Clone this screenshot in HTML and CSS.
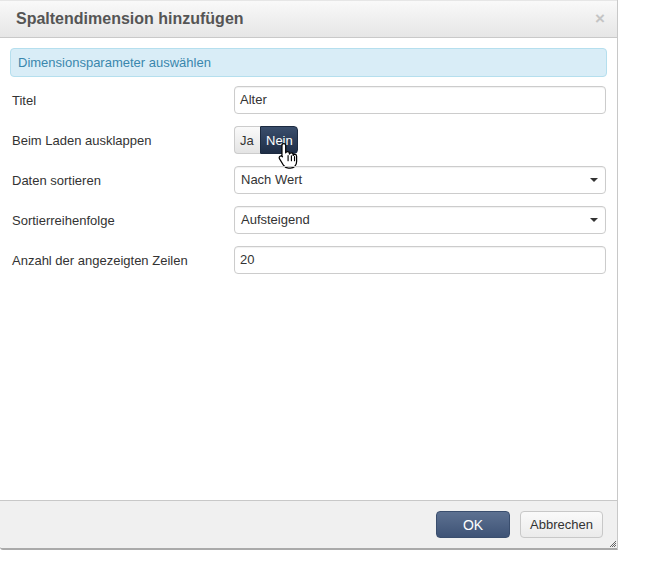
FILE: index.html
```html
<!DOCTYPE html>
<html>
<head>
<meta charset="utf-8">
<link rel="stylesheet" href="styles.css">
</head>
<body>
<div class="dialog">
  <div class="header">
    <h1 class="title">Spaltendimension hinzufügen</h1>
    <span class="close">×</span>
  </div>
  <div class="body">
    <div class="info">Dimensionsparameter auswählen</div>
    <div class="form">
      <div class="row">
        <label class="label">Titel</label>
        <div class="field"><div class="input">Alter</div></div>
      </div>
      <div class="row">
        <label class="label">Beim Laden ausklappen</label>
        <div class="field">
          <div class="toggle">
            <span class="opt opt-ja">Ja</span>
            <span class="opt opt-nein">Nein</span>
            <svg class="cursor" width="20" height="26" viewBox="0 0 20 26">
              <path d="M5.5 1.5c1 0 1.8.8 1.8 1.8v7.2c.3-.8 1-1.3 1.8-1.3 1 0 1.8.8 1.8 1.8v.6c.3-.7 1-1.2 1.8-1.2 1 0 1.8.8 1.8 1.8v.7c.3-.6.9-1 1.6-1 1 0 1.7.8 1.7 1.8v5.3c0 3.4-2.4 6.2-6 6.2H9.9c-2 0-3.5-1-4.6-2.6L1.4 16.3c-.6-.9-.4-2 .4-2.5.8-.5 1.8-.3 2.4.4l-.5-.4V3.3c0-1 .8-1.8 1.8-1.8z" fill="#fff" stroke="#000" stroke-width="1.2" stroke-linejoin="round"/>
              <path d="M9.6 13v5M12.8 13.3v4.7M15.8 14v4" stroke="#000" stroke-width="1.1" stroke-linecap="round"/>
            </svg>
          </div>
        </div>
      </div>
      <div class="row">
        <label class="label">Daten sortieren</label>
        <div class="field"><div class="input select">Nach Wert<span class="caret"></span></div></div>
      </div>
      <div class="row">
        <label class="label">Sortierreihenfolge</label>
        <div class="field"><div class="input select">Aufsteigend<span class="caret"></span></div></div>
      </div>
      <div class="row">
        <label class="label">Anzahl der angezeigten Zeilen</label>
        <div class="field"><div class="input">20</div></div>
      </div>
    </div>
  </div>
  <div class="footer">
    <button class="btn btn-primary">OK</button>
    <button class="btn btn-default">Abbrechen</button>
    <svg class="grip" width="8" height="8" viewBox="0 0 8 8">
      <path d="M7 1L1 7M7 3L3 7M7 5L5 7" stroke="#666" stroke-width="1"/>
    </svg>
  </div>
</div>
</body>
</html>
```

FILE: styles.css
```css
* { box-sizing: border-box; }
html, body { margin: 0; padding: 0; background: #fff; }
body {
  font-family: "Liberation Sans", Arial, sans-serif;
  font-size: 13px;
  color: #333;
  width: 646px;
  height: 567px;
}
.dialog {
  width: 618px;
  height: 550px;
  border-right: 1px solid #c8c8c8;
  border-bottom: 2px solid #aaa;
  border-bottom-left-radius: 3px;
  background: #fff;
  display: flex;
  flex-direction: column;
  position: relative;
}
.header {
  height: 38px;
  flex: none;
  display: flex;
  align-items: center;
  justify-content: space-between;
  padding: 0 12px 0 16px;
  background: linear-gradient(#f9f9f9, #e6e6e6);
  border-bottom: 1px solid #c9c9c9;
  border-top: 1px solid #e6e6e6;
}
.title {
  margin: 0;
  font-size: 16px;
  font-weight: bold;
  color: #555;
  line-height: 20px;
  margin-top: -1px;
}
.close {
  font-size: 17px;
  font-weight: bold;
  color: #c4c4c4;
  line-height: 1;
  margin-top: -2px;
}
.body {
  flex: 1;
  padding: 10px 10px 0 10px;
}
.info {
  height: 29px;
  background: #d9edf7;
  border: 1px solid #b5dfee;
  border-radius: 4px;
  color: #3a87ad;
  padding: 0 7px;
  line-height: 27px;
  font-size: 13px;
}
.form {
  display: flex;
  flex-direction: column;
  gap: 12px;
  margin-top: 9px;
}
.row {
  display: flex;
  align-items: center;
  height: 28px;
}
.label {
  width: 224px;
  padding-left: 2px;
  flex: none;
}
.field {
  width: 372px;
  flex: none;
}
.input {
  height: 28px;
  border: 1px solid #ccc;
  border-radius: 4px;
  padding: 0 5px;
  line-height: 26px;
  color: #333;
  box-shadow: inset 0 1px 1px rgba(0,0,0,0.06);
  position: relative;
}
.select { padding-left: 6px; }
.caret {
  position: absolute;
  right: 7px;
  top: 11px;
  width: 0;
  height: 0;
  border-left: 4px solid transparent;
  border-right: 4px solid transparent;
  border-top: 4px solid #333;
}
.toggle {
  display: inline-flex;
  height: 28px;
  position: relative;
}
.opt {
  display: flex;
  align-items: center;
  height: 28px;
}
.opt-ja {
  width: 26px;
  padding-left: 5px;
  background: linear-gradient(#fafafa, #e4e4e4);
  border: 1px solid #ccc;
  border-right: none;
  border-radius: 4px 0 0 4px;
  color: #333;
}
.opt-nein {
  width: 38px;
  padding-left: 5px;
  background: linear-gradient(#3a4e6c, #1f2e47);
  border: 1px solid #1c2a40;
  border-radius: 0 4px 4px 0;
  color: #fff;
}
.cursor {
  position: absolute;
  left: 44px;
  top: 16px;
  width: 21px;
  height: 27px;
}
.footer {
  height: 48px;
  flex: none;
  background: #f0f0f0;
  border-top: 1px solid #c8c8c8;
  border-bottom-left-radius: 3px;
  display: flex;
  align-items: center;
  justify-content: flex-end;
  gap: 10px;
  padding: 0 14px 0 0;
  position: relative;
}
.btn {
  font-family: "Liberation Sans", Arial, sans-serif;
  font-size: 13px;
  height: 27px;
  border-radius: 4px;
  padding: 0;
  cursor: default;
}
.btn-primary {
  width: 74px;
  background: linear-gradient(#5d7191, #3e5376);
  border: 1px solid #3a4e6e;
  color: #fff;
  font-size: 14px;
}
.btn-default {
  width: 83px;
  background: linear-gradient(#fafafa, #ebebeb);
  border: 1px solid #c8c8c8;
  color: #333;
}
.grip {
  position: absolute;
  right: 0;
  bottom: 0;
}
```
